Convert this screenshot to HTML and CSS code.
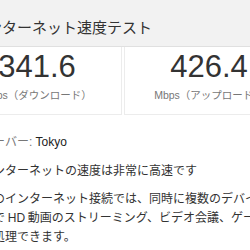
FILE: index.html
```html
<!DOCTYPE html>
<html lang="ja">
<head>
<meta charset="utf-8">
<link rel="stylesheet" href="styles.css">
</head>
<body>
<div class="page">
  <header class="bar"><h1 class="title">インターネット速度テスト</h1></header>
  <div class="results">
    <div class="box">
      <div class="num">341.6</div>
      <div class="unit">Mbps（ダウンロード）</div>
    </div>
    <div class="box">
      <div class="num">426.4</div>
      <div class="unit">Mbps（アップロード）</div>
    </div>
  </div>
  <div class="info">
    <p class="server"><span class="lbl">サーバー: </span><span class="val">Tokyo</span></p>
    <p class="verdict">インターネットの速度は非常に高速です</p>
    <p class="desc">このインターネット接続では、同時に複数のデバイスで HD 動画のストリーミング、ビデオ会議、ゲームを処理できます。</p>
  </div>
</div>
</body>
</html>
```

FILE: styles.css
```css
html, body {
  margin: 0;
  padding: 0;
  background: #fff;
  overflow: hidden;
}
body {
  width: 250px;
  height: 250px;
  font-family: "Liberation Sans", Arial, "Noto Sans CJK JP", sans-serif;
}
.page {
  margin-left: -48px;
  width: 400px;
}
.bar {
  background: #f2f2f2;
  border-bottom: 1px solid #e0e0e0;
  height: 46px;
  display: flex;
  align-items: center;
  padding-left: 20px;
}
.title {
  margin: 0;
  font-family: "Noto Sans CJK JP", sans-serif;
  font-weight: 400;
  font-size: 15px;
  color: #333;
  padding-top: 6px;
}
.results {
  display: flex;
  gap: 2px;
}
.box {
  box-sizing: border-box;
  width: 170px;
  height: 68px;
  border: 1px solid #ececec;
  border-top: none;
  display: flex;
  flex-direction: column;
  align-items: center;
}
.num {
  font-size: 31px;
  color: #333;
  line-height: 30px;
  margin-top: 5px;
}
.unit {
  font-size: 10.5px;
  line-height: 14px;
  color: #777;
  margin-top: 6px;
}
.info {
  padding-left: 29px;
  font-size: 12px;
  color: #333;
}
.info p { margin: 0; }
.server {
  margin-top: 19px !important;
  line-height: 16px;
  color: #777;
}
.server .val { color: #222; }
.verdict {
  margin-top: 13px !important;
  line-height: 16px;
}
.desc {
  margin-top: 11px !important;
  line-height: 19px;
  width: 287px;
  word-spacing: -0.6px;
}
```
